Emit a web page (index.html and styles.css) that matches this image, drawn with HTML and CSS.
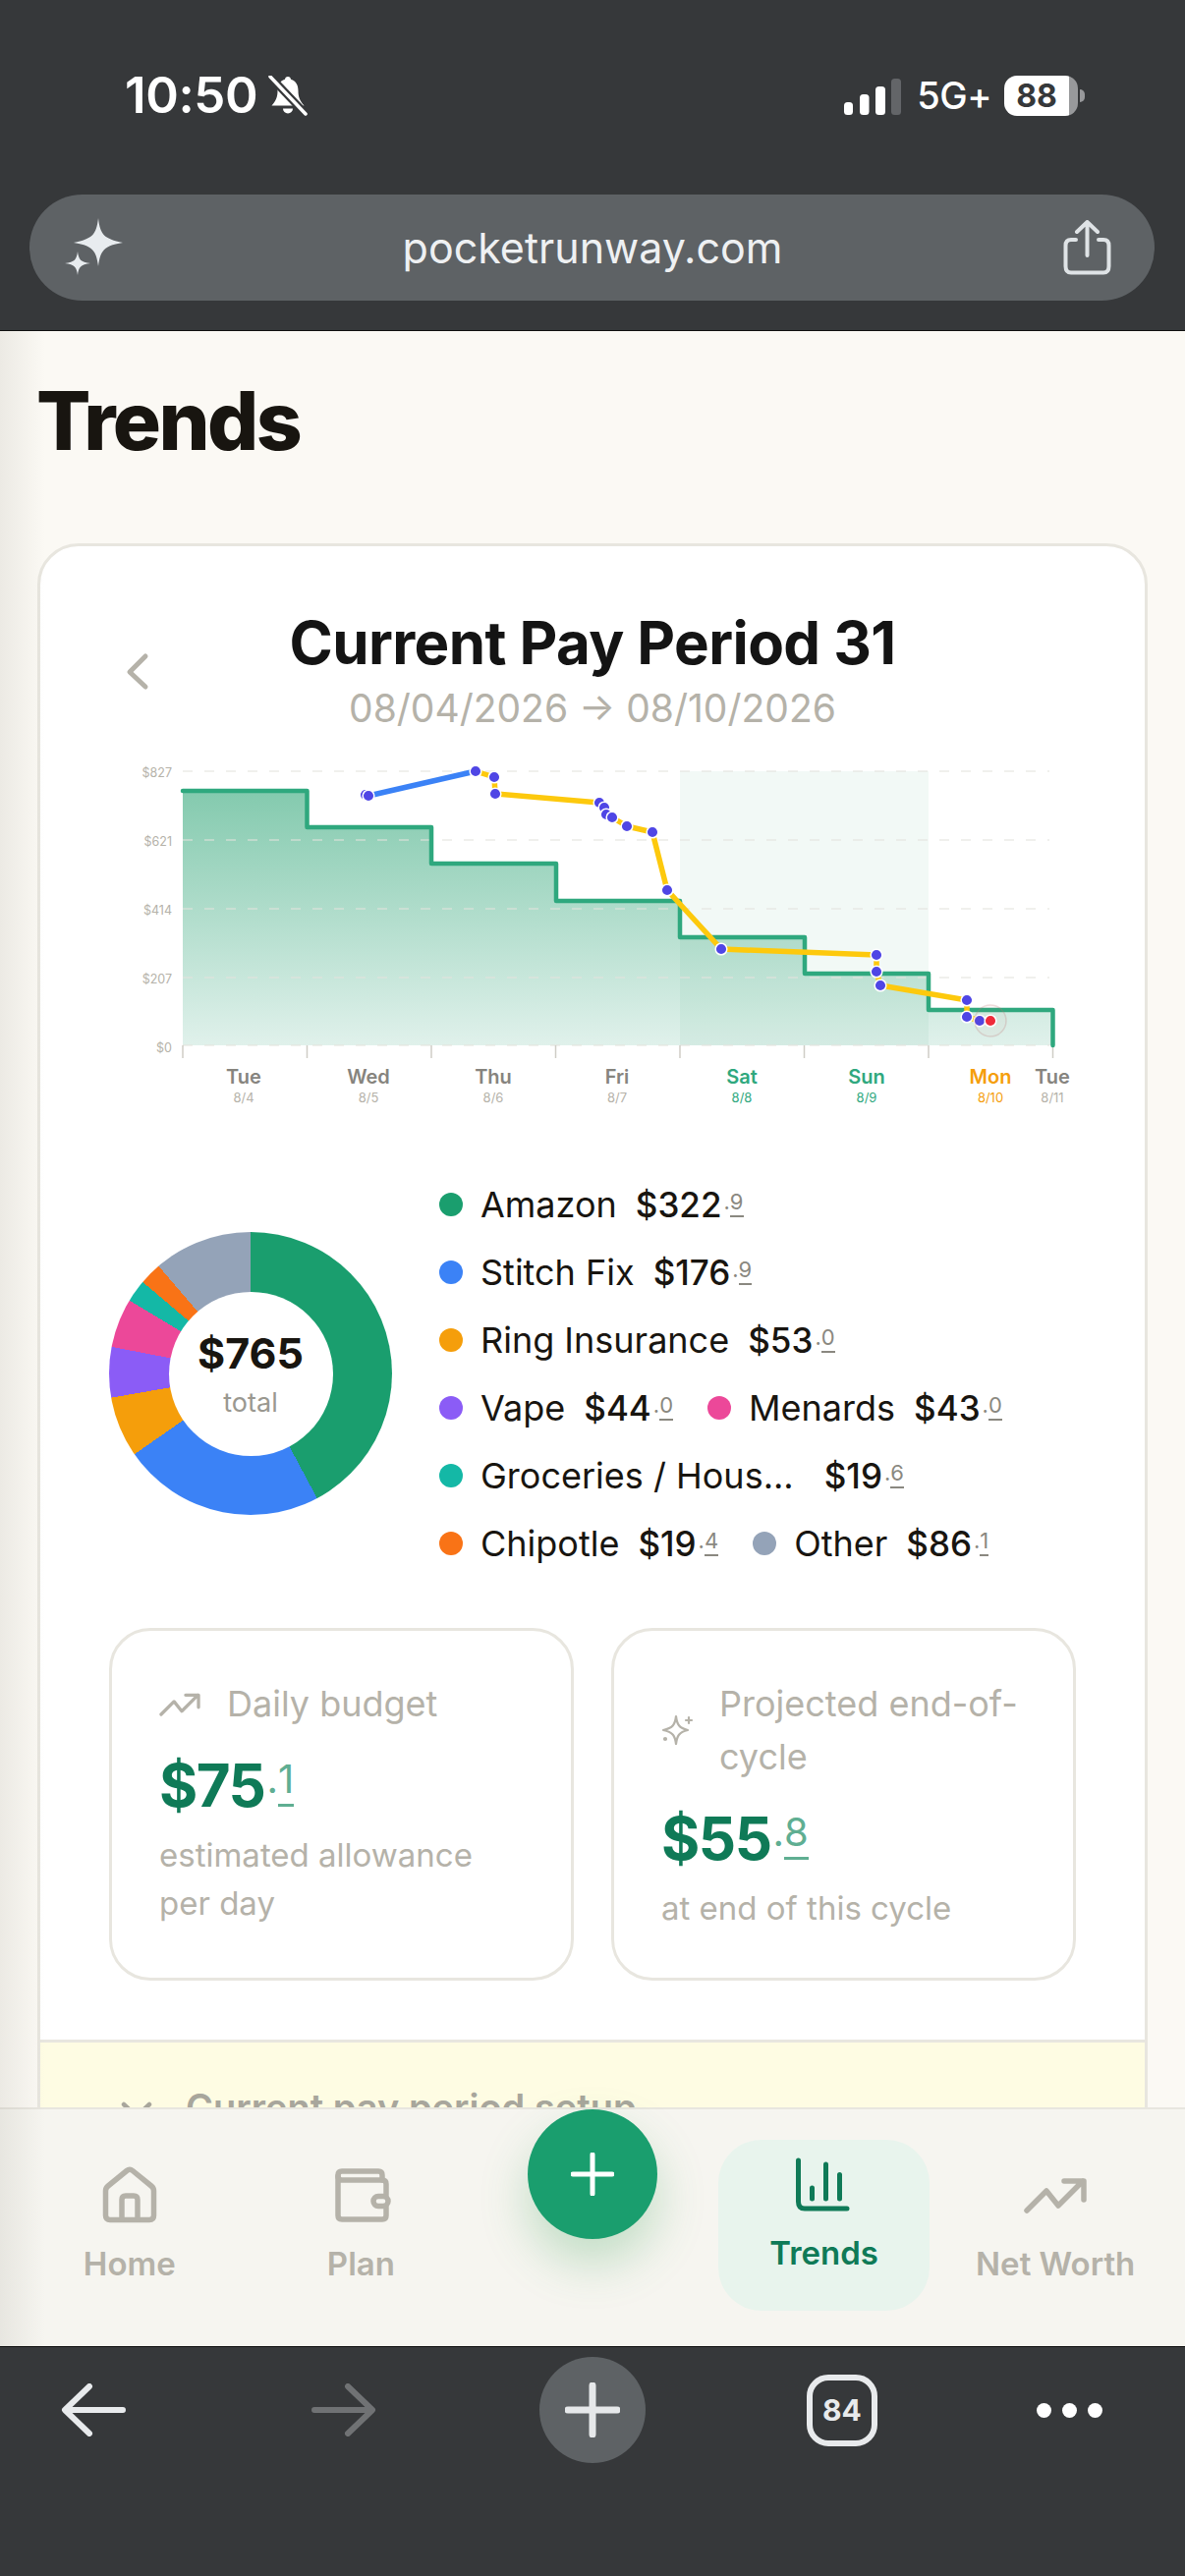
FILE: index.html
```html
<!DOCTYPE html>
<html lang="en">
  <head>
    <meta charset="UTF-8" />
    <meta name="viewport" content="width=device-width, initial-scale=1.0" />
    <title>Trends</title>
    <link rel="stylesheet" href="styles.css">
  </head>
  <body>
    <!-- Browser top -->
    <header class="browser-top">
      <div class="status-bar">
        <div class="status-left">
          <span class="clock">10:50</span>
          <svg class="bell" viewBox="0 0 40 41">
            <path d="M20 1c-1.7 0-3 1.200-3 2.800C11.500 5.500 9.500 10 9.500 15.500c0 6-1.700 10.500-6 15h33c-4.300-4.500-6-9-6-15C30.500 10 28.500 5.500 23 3.800 23 2.200 21.700 1 20 1z" fill="#fff" />
            <path d="M15 33.500a5 5 0 0 0 10 0z" fill="#fff" />
            <line x1="2" y1="1" x2="38" y2="39" stroke="#36383a" stroke-width="8" />
            <line x1="2" y1="1" x2="38" y2="39" stroke="#fff" stroke-width="3.500" stroke-linecap="round" />
          </svg>
        </div>
        <div class="status-right">
          <svg class="signal" viewBox="0 0 58 37">
            <rect x="0" y="24" width="9" height="13" rx="3.500" fill="#fff" />
            <rect x="16" y="16" width="9.500" height="21" rx="3.500" fill="#fff" />
            <rect x="32" y="8" width="10" height="29" rx="3.500" fill="#fff" />
            <rect x="48" y="0" width="10" height="37" rx="3.500" fill="#636568" />
          </svg>
          <span class="network">5G+</span>
          <span class="battery">88</span>
        </div>
      </div>
      <div class="url-bar">
        <svg class="url-spark" viewBox="0 0 60 60">
          <path d="M35 0C37 17 41 21 60 25 41 28 37 33 35 49 33 33 29 28 10 25 29 21 33 17 35 0z" fill="#e8ecef" />
          <path d="M14 34C15 42 17 45 27 46 17 47 15 50 14 58 13 50 11 47 1 46 11 45 13 42 14 34z" fill="#e8ecef" />
        </svg>
        <span class="url-text">pocketrunway.com</span>
        <svg class="url-share" viewBox="0 0 49 56" fill="none" stroke="#dfe3e6" stroke-width="4" stroke-linecap="round" stroke-linejoin="round">
          <path d="M13 20H8Q2.500 20 2.500 26V47Q2.500 53.500 8 53.500H41Q46.500 53.500 46.500 47V26Q46.500 20 41 20H36" />
          <path d="M24.500 36V3M14 12L24.500 2 35 12" />
        </svg>
      </div>
    </header>

    <main class="page">
      <div class="content">
        <h1 class="page-title">Trends</h1>

        <section class="card">
          <div class="card-body">
            <div class="period-head">
              <svg class="period-back" viewBox="0 0 30 40" fill="none" stroke="#b5b2a9" stroke-width="5" stroke-linecap="round" stroke-linejoin="round">
                <path d="M22 4L6 20 22 35" />
              </svg>
              <div class="period-title">
                <h2>Current Pay Period 31</h2>
                <p>08/04/2026 → 08/10/2026</p>
              </div>
            </div>

            <!-- Burn down chart, viewBox uses the screen coordinates -->
            <svg class="chart" viewBox="111 770 982 360">
              <defs>
                <linearGradient id="areaFill" gradientUnits="userSpaceOnUse" x1="0" y1="800" x2="0" y2="1064">
                  <stop offset="0" stop-color="#82c9ad" />
                  <stop offset="1" stop-color="#e0f1eb" />
                </linearGradient>
              </defs>

              <path class="area" d="M186 805H312.500V842H439V879H566V917H692V954H819V991H945V1028H1071.500V1064H186Z" />
              <rect class="weekend" x="692" y="785" width="253" height="279" />

              <g class="grid-lines">
                <line x1="186" y1="785" x2="1068" y2="785" />
                <line x1="186" y1="855" x2="1068" y2="855" />
                <line x1="186" y1="925" x2="1068" y2="925" />
                <line x1="186" y1="995" x2="1068" y2="995" />
                <line x1="186" y1="1064" x2="1068" y2="1064" />
              </g>
              <g class="ticks">
                <line x1="186" y1="1064" x2="186" y2="1077" />
                <line x1="312.500" y1="1064" x2="312.500" y2="1077" />
                <line x1="439" y1="1064" x2="439" y2="1077" />
                <line x1="565.500" y1="1064" x2="565.500" y2="1077" />
                <line x1="692" y1="1064" x2="692" y2="1077" />
                <line x1="818.500" y1="1064" x2="818.500" y2="1077" />
                <line x1="945" y1="1064" x2="945" y2="1077" />
                <line x1="1071.500" y1="1064" x2="1071.500" y2="1077" />
              </g>

              <path class="budget-line" d="M186 805H312.500V842H439V879H566V917H692V954H819V991H945V1028H1071.500V1064" />

              <path class="spend-blue" d="M375 810L484 785" />
              <path class="spend-yellow" d="M484 785L503 791 504 808 610 817 615 822 617 829 623 832 638 841 664 847 679 906 734 966 892 972 892 989 896 1003 984 1018 984 1035 997 1039" />

              <g class="dots">
                <circle cx="372" cy="809" r="5.800" />
                <circle cx="375" cy="810" r="5.800" />
                <circle cx="484" cy="785" r="5.800" />
                <circle cx="503" cy="791" r="5.800" />
                <circle cx="504" cy="808" r="5.800" />
                <circle cx="610" cy="817" r="5.800" />
                <circle cx="615" cy="822" r="5.800" />
                <circle cx="617" cy="829" r="5.800" />
                <circle cx="623" cy="832" r="5.800" />
                <circle cx="638" cy="841" r="5.800" />
                <circle cx="664" cy="847" r="5.800" />
                <circle cx="679" cy="906" r="5.800" />
                <circle cx="734" cy="966" r="5.800" />
                <circle cx="892" cy="972" r="5.800" />
                <circle cx="892" cy="989" r="5.800" />
                <circle cx="896" cy="1003" r="5.800" />
                <circle cx="984" cy="1018" r="5.800" />
                <circle cx="984" cy="1035" r="5.800" />
                <circle cx="997" cy="1039" r="5.800" />
              </g>
              <circle class="today-ring" cx="1008" cy="1039" r="16" />
              <circle class="today-dot" cx="1008" cy="1039" r="5.800" />

              <g class="y-labels">
                <text x="175" y="791">$827</text>
                <text x="175" y="861">$621</text>
                <text x="175" y="931">$414</text>
                <text x="175" y="1001">$207</text>
                <text x="175" y="1071">$0</text>
              </g>
              <g class="day-labels">
                <text x="248" y="1103">Tue</text>
                <text x="375" y="1103">Wed</text>
                <text x="502" y="1103">Thu</text>
                <text x="628" y="1103">Fri</text>
                <text class="green" x="755" y="1103">Sat</text>
                <text class="green" x="882" y="1103">Sun</text>
                <text class="orange" x="1008" y="1103">Mon</text>
                <text x="1071" y="1103">Tue</text>
              </g>
              <g class="date-labels">
                <text x="248" y="1122">8/4</text>
                <text x="375" y="1122">8/5</text>
                <text x="502" y="1122">8/6</text>
                <text x="628" y="1122">8/7</text>
                <text class="green" x="755" y="1122">8/8</text>
                <text class="green" x="882" y="1122">8/9</text>
                <text class="orange" x="1008" y="1122">8/10</text>
                <text x="1071" y="1122">8/11</text>
              </g>
            </svg>

            <div class="breakdown">
              <div class="donut">
                <div class="donut-hole">
                  <strong>$765</strong>
                  <span>total</span>
                </div>
              </div>
              <ul class="legend">
                <li><i class="dot amazon"></i><span>Amazon</span><b>$322<small>.<u>9</u></small></b></li>
                <li><i class="dot stitch"></i><span>Stitch Fix</span><b>$176<small>.<u>9</u></small></b></li>
                <li><i class="dot ring"></i><span>Ring Insurance</span><b>$53<small>.<u>0</u></small></b></li>
                <li><i class="dot vape"></i><span>Vape</span><b>$44<small>.<u>0</u></small></b></li>
                <li><i class="dot menards"></i><span>Menards</span><b>$43<small>.<u>0</u></small></b></li>
                <li class="wide"><i class="dot groceries"></i><span>Groceries / Hous...</span><b>$19<small>.<u>6</u></small></b></li>
                <li><i class="dot chipotle"></i><span>Chipotle</span><b>$19<small>.<u>4</u></small></b></li>
                <li><i class="dot other"></i><span>Other</span><b>$86<small>.<u>1</u></small></b></li>
              </ul>
            </div>

            <div class="metrics">
              <div class="metric">
                <div class="metric-label">
                  <svg class="metric-icon" viewBox="0 10 64 44" fill="none" stroke="#b5b2a9" stroke-width="5" stroke-linecap="round" stroke-linejoin="round">
                    <path d="M3 48L23 28 35 43 60 18M41 18H61V37" />
                  </svg>
                  <span>Daily budget</span>
                </div>
                <div class="metric-value">$75<small>.<u>1</u></small></div>
                <p class="metric-sub">estimated allowance per day</p>
              </div>
              <div class="metric">
                <div class="metric-label">
                  <svg class="metric-icon spark" viewBox="0 0 34 32" fill="none" stroke="#b5b2a9" stroke-width="2.200" stroke-linecap="round" stroke-linejoin="round">
                    <path d="M15 2C16 10 18 14 27 16 18 18 16 22 15 30 14 22 12 18 2 16 12 14 14 10 15 2z" />
                    <path d="M28 3V9M25 6H31" />
                    <circle cx="4" cy="25" r="1" />
                  </svg>
                  <span>Projected end-of-cycle</span>
                </div>
                <div class="metric-value">$55<small>.<u>8</u></small></div>
                <p class="metric-sub">at end of this cycle</p>
              </div>
            </div>
          </div>

          <div class="setup">
            <svg class="setup-chevron" viewBox="0 0 32 20" fill="none" stroke="#a8a69c" stroke-width="4.500" stroke-linecap="round" stroke-linejoin="round">
              <path d="M3 3L16 15 29 3" />
            </svg>
            <span>Current pay period setup</span>
          </div>
        </section>
      </div>

      <nav class="tabbar">
        <a class="tab">
          <svg viewBox="0 0 64 64" fill="none" stroke="#b5b2a9" stroke-width="5.500" stroke-linecap="round" stroke-linejoin="round">
            <path d="M7.500 28Q7.500 25 10 23L29 7.500Q32 5 35 7.500L54 23Q56.500 25 56.500 28V53Q56.500 57.500 52 57.500H12Q7.500 57.500 7.500 53Z" />
            <path d="M24 57V37Q24 33 28 33H36Q40 33 40 37V57" />
          </svg>
          <span>Home</span>
        </a>
        <a class="tab">
          <svg viewBox="0 0 64 64" fill="none" stroke="#b5b2a9" stroke-width="5.500" stroke-linecap="round" stroke-linejoin="round">
            <path d="M9 14V12Q9 8 13 8H50Q54 8 54 12V17" />
            <path d="M9 13Q9 17 13 17H54Q58 17 58 21V32M58 45V53Q58 57 54 57H13Q9 57 9 53V13" />
            <rect x="45" y="33.500" width="15" height="10" rx="5" />
          </svg>
          <span>Plan</span>
        </a>
        <button class="fab">
          <svg viewBox="0 0 44 44" stroke="#fff" stroke-width="5" stroke-linecap="round">
            <path d="M22 2V42M2 22H42" />
          </svg>
        </button>
        <a class="tab active">
          <svg viewBox="0 0 64 64" fill="none" stroke="#0f7a57" stroke-width="5" stroke-linecap="round" stroke-linejoin="round">
            <path d="M5.500 8V50Q5.500 57 12 57H55" />
            <path d="M19.500 36V47M33.500 12V47M47.500 22.500V47" />
          </svg>
          <span>Trends</span>
        </a>
        <a class="tab">
          <svg viewBox="0 0 64 64" fill="none" stroke="#b5b2a9" stroke-width="5.500" stroke-linecap="round" stroke-linejoin="round">
            <path d="M3 48L23 28 35 43 60 18M41 18H61V37" />
          </svg>
          <span>Net Worth</span>
        </a>
      </nav>
    </main>

    <!-- Browser bottom -->
    <footer class="browser-bottom">
      <svg class="nav-arrow" viewBox="0 0 66 54" fill="none" stroke="#e8eaec" stroke-width="6" stroke-linecap="round" stroke-linejoin="round">
        <path d="M29 3L4 27 29 51M5 27H63" />
      </svg>
      <svg class="nav-arrow" viewBox="0 0 66 54" fill="none" stroke="#707274" stroke-width="6" stroke-linecap="round" stroke-linejoin="round">
        <path d="M37 3L62 27 37 51M61 27H3" />
      </svg>
      <div class="nav-plus">
        <svg viewBox="0 0 56 56" stroke="#e6e8ea" stroke-width="7" stroke-linecap="round">
          <path d="M28 3V53M3 28H53" />
        </svg>
      </div>
      <div class="nav-tabs">84</div>
      <div class="nav-more"><i></i><i></i><i></i></div>
    </footer>
  </body>
</html>
```

FILE: styles.css
```css
* {
  box-sizing: border-box;
}

body {
  margin: 0;
  width: 1206px;
  height: 2622px;
  overflow: hidden;
  display: flex;
  flex-direction: column;
  background: #36383a;
  font-family: Inter, "Noto Sans", sans-serif;
}

h1,
h2,
p,
ul {
  margin: 0;
  padding: 0;
}

/* Browser top */
.browser-top {
  height: 337px;
  flex: none;
  background: #36383a;
  border-bottom: 1px solid #111;
}

.status-bar {
  height: 198px;
  padding: 0 109px 0 127px;
  display: flex;
  justify-content: space-between;
  align-items: flex-start;
  color: #fff;
}

.status-left {
  display: flex;
  align-items: center;
  gap: 11px;
  margin-top: 72px;
}

.clock {
  font-size: 51px;
  line-height: 50px;
  font-weight: 600;
  letter-spacing: -0.4px;
}

.bell {
  width: 40px;
  height: 41px;
  display: block;
}

.status-right {
  display: flex;
  align-items: center;
  margin-top: 77px;
}

.signal {
  width: 58px;
  height: 37px;
  display: block;
  margin-top: 2px;
  margin-right: 16px;
}

.network {
  font-size: 38px;
  line-height: 41px;
  font-weight: 500;
  margin-right: 13px;
  letter-spacing: -0.5px;
}

.battery {
  position: relative;
  width: 75px;
  height: 41px;
  padding-right: 9px;
  border-radius: 13px;
  background: linear-gradient(to right, #fff 88%, #98999b 88%);
  color: #36383a;
  font-size: 32px;
  line-height: 41px;
  font-weight: 700;
  text-align: center;
}

.battery::after {
  content: "";
  position: absolute;
  left: 77px;
  top: 14px;
  width: 5px;
  height: 13px;
  border-radius: 0 6px 6px 0;
  background: #98999b;
}

.url-bar {
  width: 1145px;
  height: 108px;
  margin-left: 30px;
  padding: 0 44px 0 35px;
  border-radius: 54px;
  background: #5e6265;
  display: grid;
  grid-template-columns: 1fr auto 1fr;
  align-items: center;
}

.url-spark {
  width: 60px;
  height: 60px;
  display: block;
}

.url-text {
  font-size: 43px;
  color: #eef0f2;
  transform: translateX(5px);
}

.url-share {
  width: 49px;
  height: 56px;
  display: block;
  justify-self: end;
}

/* Page */
.page {
  position: relative;
  flex: 1;
  min-height: 0;
  display: flex;
  flex-direction: column;
  background: #fbf9f4;
}

/* soft edge of the previous page */
.page::before {
  content: "";
  position: absolute;
  top: 0;
  bottom: 0;
  left: 0;
  width: 46px;
  background: linear-gradient(to right, rgba(60, 55, 40, 0.08), rgba(60, 55, 40, 0));
  z-index: 3;
  pointer-events: none;
}

.content {
  flex: 1;
  min-height: 0;
  overflow: hidden;
  padding: 44px 38px 0;
}

.page-title {
  font-size: 82px;
  line-height: 96px;
  font-weight: 800;
  letter-spacing: -2.6px;
  color: #181510;
  margin-bottom: 76px;
  margin-left: -1px;
}

.card {
  background: #fff;
  border: 3px solid #e8e6df;
  border-radius: 42px;
  overflow: hidden;
}

.card-body {
  padding: 62px 70px 60px;
}

.period-head {
  display: grid;
  grid-template-columns: 1fr auto 1fr;
  align-items: center;
}

.period-back {
  width: 30px;
  height: 40px;
  display: block;
  margin-left: 15px;
}

.period-title {
  text-align: center;
}

.period-title h2 {
  font-size: 60px;
  line-height: 72px;
  font-weight: 700;
  letter-spacing: -0.6px;
  color: #141414;
}

.period-title p {
  font-size: 39px;
  line-height: 56px;
  margin-top: 3px;
  color: #b5b2a9;
}

/* Chart */
.chart {
  display: block;
  width: 982px;
  height: 360px;
  margin-top: 21px;
  font-family: Inter, "Noto Sans", sans-serif;
}

.area {
  fill: url(#areaFill);
}

.weekend {
  fill: rgba(26, 158, 110, 0.06);
}

.grid-lines line {
  stroke: #e5e4de;
  stroke-width: 1.500;
  stroke-dasharray: 10 12;
  opacity: 0.7;
}

.ticks line {
  stroke: #cfcdc6;
  stroke-width: 1.500;
}

.budget-line {
  fill: none;
  stroke: #2fa87e;
  stroke-width: 4.500;
  stroke-linejoin: round;
  stroke-linecap: round;
}

.spend-blue,
.spend-yellow {
  fill: none;
  stroke-width: 5.500;
  stroke-linejoin: round;
}

.spend-blue {
  stroke: #3b82f6;
}

.spend-yellow {
  stroke: #fdc90d;
}

.dots circle {
  fill: #4f46e5;
  stroke: #fff;
  stroke-width: 1.500;
}

.today-ring {
  fill: rgba(239, 68, 68, 0.03);
  stroke: rgba(190, 120, 120, 0.25);
  stroke-width: 1.500;
}

.today-dot {
  fill: #ef2b3a;
  stroke: #fff;
  stroke-width: 1.500;
}

.y-labels text {
  font-size: 12.500px;
  fill: #b5b2a9;
  text-anchor: end;
}

.day-labels text {
  font-size: 20px;
  font-weight: 600;
  fill: #86847e;
  text-anchor: middle;
}

.date-labels text {
  font-size: 13px;
  fill: #b5b2a9;
  text-anchor: middle;
}

.chart text.green {
  fill: #2fa87e;
}

.chart text.orange {
  fill: #f59e0b;
}

/* Donut and legend */
.breakdown {
  display: flex;
  align-items: center;
  gap: 48px;
  margin-top: 61px;
}

.donut {
  width: 288px;
  height: 288px;
  flex: none;
  border-radius: 50%;
  display: flex;
  align-items: center;
  justify-content: center;
  background: conic-gradient(
    #1a9e6e 0deg 151.95deg,
    #3b82f6 151.95deg 235.2deg,
    #f59e0b 235.2deg 260.14deg,
    #8b5cf6 260.14deg 280.85deg,
    #ec4899 280.85deg 301.08deg,
    #14b8a6 301.08deg 310.31deg,
    #f97316 310.31deg 319.44deg,
    #94a3b8 319.44deg 360deg
  );
}

.donut-hole {
  width: 167px;
  height: 167px;
  border-radius: 50%;
  background: #fff;
  display: flex;
  flex-direction: column;
  align-items: center;
  justify-content: center;
}

.donut-hole strong {
  font-size: 43px;
  line-height: 50px;
  font-weight: 700;
  color: #181510;
}

.donut-hole span {
  font-size: 27px;
  line-height: 34px;
  color: #9a9890;
  margin-top: 9px;
}

.legend {
  flex: 1;
  list-style: none;
  display: flex;
  flex-wrap: wrap;
  column-gap: 35px;
}

.legend li {
  height: 69px;
  display: flex;
  align-items: center;
  font-size: 36px;
  color: #181510;
}

.legend b {
  font-size: 35px;
  font-weight: 500;
  margin-left: 19px;
  white-space: nowrap;
}

.legend .wide b {
  margin-left: 31px;
}

.dot {
  width: 24px;
  height: 24px;
  flex: none;
  border-radius: 50%;
  margin-right: 18px;
}

.amazon { background: #1a9e6e; }
.stitch { background: #3b82f6; }
.ring { background: #f59e0b; }
.vape { background: #8b5cf6; }
.menards { background: #ec4899; }
.groceries { background: #14b8a6; }
.chipotle { background: #f97316; }
.other { background: #94a3b8; }

/* cents, raised and underlined */
small {
  display: inline-block;
  font-size: 22px;
  line-height: 1;
  font-weight: 400;
  vertical-align: 8px;
  margin-left: 2px;
  color: #8a8880;
}

small u {
  display: inline-block;
  text-decoration: none;
  padding-bottom: 3px;
  border-bottom: 2px solid #8a8880;
}

/* Metric cards */
.metrics {
  display: grid;
  grid-template-columns: 1fr 1fr;
  gap: 38px;
  margin-top: 52px;
}

.metric {
  border: 3px solid #e8e6df;
  border-radius: 42px;
  padding: 47px 40px 46px 48px;
}

.metric-label {
  display: flex;
  align-items: center;
  gap: 27px;
  font-size: 36px;
  line-height: 54px;
  color: #b5b2a9;
}

.metric-icon {
  width: 42px;
  height: 29px;
  flex: none;
  display: block;
}

.metric-icon.spark {
  width: 34px;
  height: 32px;
  margin-right: -2px;
}

.metric-value {
  font-size: 60px;
  line-height: 72px;
  font-weight: 700;
  letter-spacing: -1.5px;
  color: #0f7a57;
  margin-top: 20px;
}

.metric-value small {
  font-size: 40px;
  vertical-align: 14px;
  letter-spacing: 0;
  color: #5fae92;
}

.metric-value small u {
  padding-bottom: 5px;
  border-bottom: 3px solid #5fae92;
}

.metric-sub {
  font-size: 33px;
  line-height: 49px;
  color: #b5b2a9;
  margin-top: 11px;
  padding-right: 30px;
}

/* Setup strip, cut off by the tab bar */
.setup {
  height: 200px;
  padding: 42px 0 0 82px;
  background: #fefce3;
  border-top: 3px solid #e8e6df;
  display: flex;
  align-items: flex-start;
  gap: 34px;
  font-size: 38px;
  line-height: 48px;
  font-weight: 600;
  color: #a8a69c;
}

.setup-chevron {
  width: 32px;
  height: 20px;
  margin-top: 18px;
  flex: none;
}

/* Tab bar */
.tabbar {
  height: 243px;
  flex: none;
  padding: 0 14px;
  background: #f6f5f0;
  border-top: 2px solid #e8e6df;
  display: grid;
  grid-template-columns: repeat(5, 1fr);
  align-items: start;
  position: relative;
  z-index: 2;
}

.tab {
  height: 174px;
  margin-top: 31px;
  padding-top: 24px;
  border-radius: 44px;
  display: flex;
  flex-direction: column;
  align-items: center;
  font-size: 33px;
  line-height: 44px;
  font-weight: 600;
  color: #b5b2a9;
}

.tab svg {
  width: 64px;
  height: 64px;
  display: block;
  margin-bottom: 16px;
}

.tab.active {
  width: 215px;
  justify-self: center;
  padding-top: 13px;
  background: #e8f4ed;
  color: #0f7a57;
}

.fab {
  width: 132px;
  height: 132px;
  margin-top: 0;
  padding: 0;
  justify-self: center;
  border: none;
  border-radius: 50%;
  background: #1a9e6e;
  box-shadow: 0 24px 48px rgba(60, 160, 90, 0.28);
  display: flex;
  align-items: center;
  justify-content: center;
}

.fab svg {
  width: 44px;
  height: 44px;
  display: block;
}

/* Browser bottom */
.browser-bottom {
  height: 234px;
  flex: none;
  padding-top: 10px;
  background: #36383a;
  border-top: 1px solid #111;
  display: grid;
  grid-template-columns: 190px 320px 186px 322px 140px;
  grid-template-rows: 108px;
  justify-items: center;
  align-items: center;
}

.nav-arrow {
  width: 66px;
  height: 54px;
  display: block;
}

.nav-plus {
  width: 108px;
  height: 108px;
  border-radius: 50%;
  background: #5e6265;
  display: flex;
  align-items: center;
  justify-content: center;
}

.nav-plus svg {
  width: 56px;
  height: 56px;
  display: block;
}

.nav-tabs {
  width: 72px;
  height: 73px;
  border: 6px solid #e8eaec;
  border-radius: 22px;
  color: #e8eaec;
  font-size: 30px;
  line-height: 61px;
  font-weight: 700;
  text-align: center;
}

.nav-more {
  display: flex;
  gap: 11px;
}

.nav-more i {
  width: 15px;
  height: 15px;
  border-radius: 50%;
  background: #fff;
}
```
